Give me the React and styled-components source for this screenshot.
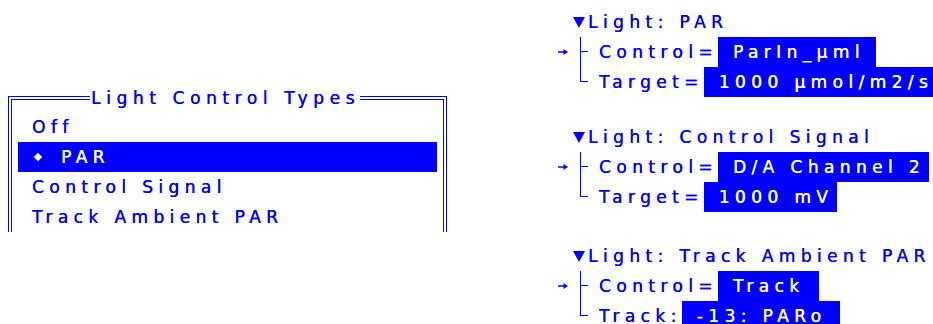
import React from "react";
import styled, { createGlobalStyle } from "styled-components";

const BLUE = "#0000ff";

const GlobalStyle = createGlobalStyle`
  html, body {
    margin: 0;
    padding: 0;
    background: #fff;
  }
  body {
    font-family: "DejaVu Sans", "Liberation Sans", sans-serif;
  }
`;

const Screen = styled.div`
  width: 933px;
  height: 324px;
  overflow: hidden;
  display: flex;
  align-items: flex-start;
  color: ${BLUE};
  font-size: 17px;
  letter-spacing: 5.4px;
  white-space: nowrap;
  text-shadow: 0.35px 0 0 currentColor;
`;

/* left: the option list window, cut off at the bottom */
const LeftPane = styled.div`
  margin: 88px 0 0 8px;
  width: 439px;
  height: 144px;
  overflow: hidden;
  flex: none;
`;

const Frame = styled.fieldset`
  margin: 0;
  padding: 4px 6px 14px;
  border: 4px double ${BLUE};
  min-inline-size: 0;
`;

const FrameTitle = styled.legend`
  margin-left: 72px;
  padding: 0 0 0 1px;
  line-height: 20px;
  letter-spacing: 5.6px;
`;

const Option = styled.div`
  display: flex;
  align-items: center;
  height: 30px;
  line-height: 30px;
  padding-left: 14px;
  background: ${(p) => (p.$selected ? BLUE : "transparent")};
  color: ${(p) => (p.$selected ? "#fff" : BLUE)};
`;

const Diamond = styled.span`
  flex: none;
  width: 6px;
  height: 6px;
  margin: 0 20px 0 3px;
  background: #fff;
  transform: rotate(45deg);
`;

/* right: three light setting trees */
const RightPane = styled.div`
  margin-left: 109px;
  padding-top: 7px;
  display: flex;
  flex-direction: column;
`;

const Group = styled.div`
  display: flex;
  flex-direction: column;
  margin-top: ${(p) => p.$gap || 0}px;
`;

const TitleRow = styled.div`
  display: flex;
  align-items: center;
  height: 30px;
  line-height: 30px;
  padding-left: 17px;
`;

const Caret = styled.svg`
  flex: none;
  margin-right: 3px;
`;

const FieldRow = styled.div`
  display: flex;
  align-items: stretch;
  height: 30px;
  line-height: 30px;
`;

const ArrowSlot = styled.div`
  flex: none;
  display: flex;
  align-items: center;
  width: 24px;
  padding-left: 2px;
  box-sizing: border-box;
`;

const Tree = styled.div`
  flex: none;
  width: 8px;
  display: grid;
  grid-template-rows: 15px 1fr;
`;

const TreeTop = styled.div`
  border-left: 1px solid ${BLUE};
  border-bottom: 1px solid ${BLUE};
`;

const TreeBottom = styled.div`
  border-left: ${(p) => (p.$last ? "none" : `1px solid ${BLUE}`)};
`;

const Label = styled.span`
  margin-left: 11px;
`;

const Value = styled.span`
  flex: none;
  min-width: ${(p) => p.$width}px;
  box-sizing: border-box;
  padding: 0 4px 0 15px;
  background: ${BLUE};
  color: #fff;
`;

const options = ["Off", "PAR", "Control Signal", "Track Ambient PAR"];

const groups = [
  {
    title: "Light: PAR",
    gap: 0,
    fields: [
      { label: "Control=", value: "ParIn_µml", width: 158 },
      { label: "Target=", value: "1000 µmol/m2/s", width: 240 },
    ],
  },
  {
    title: "Light: Control Signal",
    gap: 25,
    fields: [
      { label: "Control=", value: "D/A Channel 2", width: 200 },
      { label: "Target=", value: "1000 mV", width: 128 },
    ],
  },
  {
    title: "Light: Track Ambient PAR",
    gap: 29,
    fields: [
      { label: "Control=", value: "Track", width: 101 },
      { label: "Track:", value: "-13: PARo", width: 158 },
    ],
  },
];

const Arrow = () => (
  <svg width="10" height="8" viewBox="0 0 10 8">
    <path d="M0 4H8" stroke={BLUE} strokeWidth="1.5" />
    <path d="M5.5 1L10 4L5.5 7Z" fill={BLUE} />
  </svg>
);

const LightGroup = ({ title, gap, fields }) => (
  <Group $gap={gap}>
    <TitleRow>
      <Caret width="12" height="11" viewBox="0 0 12 11">
        <polygon points="0,0 12,0 6,11" fill={BLUE} />
      </Caret>
      {title}
    </TitleRow>
    {fields.map((f, i) => (
      <FieldRow key={f.label}>
        <ArrowSlot>{i === 0 && <Arrow />}</ArrowSlot>
        <Tree>
          <TreeTop />
          <TreeBottom $last={i === fields.length - 1} />
        </Tree>
        <Label>{f.label}</Label>
        <Value $width={f.width}>{f.value}</Value>
      </FieldRow>
    ))}
  </Group>
);

export default function App() {
  return (
    <>
      <GlobalStyle />
      <Screen>
        <LeftPane>
          <Frame>
            <FrameTitle>Light Control Types</FrameTitle>
            {options.map((o) =>
              o === "PAR" ? (
                <Option key={o} $selected>
                  <Diamond />
                  {o}
                </Option>
              ) : (
                <Option key={o}>{o}</Option>
              )
            )}
          </Frame>
        </LeftPane>
        <RightPane>
          {groups.map((g) => (
            <LightGroup key={g.title} {...g} />
          ))}
        </RightPane>
      </Screen>
    </>
  );
}
